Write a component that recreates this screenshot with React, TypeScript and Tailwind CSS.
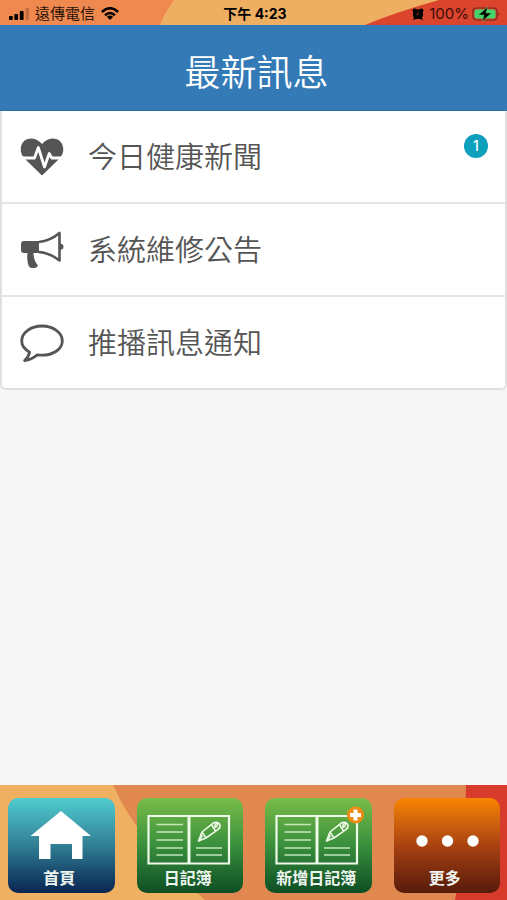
import React from "react";

function StatusBar() {
  return (
    <div className="relative h-[25px] shrink-0 overflow-hidden bg-[#f0894f] text-black">
      <svg className="absolute inset-0 h-full w-full" viewBox="0 0 507 25" preserveAspectRatio="none" aria-hidden="true">
        <path d="M174 0Q165 12 160 25H507V0Z" fill="#efaf62" />
        <path d="M439 0Q396 12 365 25H507V0Z" fill="#db452e" />
      </svg>
      <div className="relative grid h-full grid-cols-3 items-center pr-[6px] pl-[9px] pt-[2px] text-[14px] leading-[20px]">
        <div className="flex items-center whitespace-nowrap">
          <svg className="mr-[5px] h-3 w-[21px]" viewBox="0 0 21 12" aria-hidden="true">
            <rect x="0" y="8" width="3.8" height="4" rx="1" />
            <rect x="5.3" y="6" width="3.8" height="6" rx="1" />
            <rect x="10.8" y="3" width="3.8" height="9" rx="1" />
            <rect x="16.6" y="0" width="3.4" height="12" rx="1" opacity=".2" />
          </svg>
          <span className="text-[15px] text-[#2c1408]">遠傳電信</span>
          <svg className="ml-[6px] h-[13px] w-[18px]" viewBox="0 0 18 13" fill="none" stroke="black" strokeWidth="2.5" aria-hidden="true">
            <path d="M.9 5Q9-2.6 17.1 5" />
            <path d="M4 8.2Q9 3.8 14 8.2" />
            <path d="M9 13L5.9 9.8Q9 7.3 12.1 9.8Z" fill="black" stroke="none" />
          </svg>
        </div>
        <div className="text-center font-bold whitespace-nowrap">下午 4:23</div>
        <div className="flex items-center justify-end whitespace-nowrap">
          <svg className="mr-[5px] h-3 w-3" viewBox="0 0 12 12" aria-hidden="true">
            <path d="M.3 2.6Q1 .7 3 .3L4 1.2H8L9 .3Q11 .7 11.7 2.6L10.8 4Q12 7.5 10 10L10.8 11.4L9.8 12L8.6 11H3.4L2.2 12L1.2 11.4L2 10Q0 7.5 1.2 4Z" />
            <path d="M6 3.8V6.4H4.2" fill="none" stroke="#a83524" strokeWidth=".8" />
          </svg>
          <span className="mr-[3px] text-[15px] text-[#3a0e08]">100%</span>
          <svg className="h-[14px] w-[29px]" viewBox="0 0 29 14" aria-hidden="true">
            <rect x="1" y="1" width="24" height="12" rx="3.5" fill="none" stroke="#7d251a" strokeWidth="1.2" />
            <rect x="2.5" y="2.5" width="21" height="9" rx="2" fill="#45d469" />
            <path d="M26.5 5Q28.5 7 26.5 9Z" fill="#7d251a" />
            <path d="M15.5 0L6.5 8H12L10.5 14L19.5 6H14Z" stroke="#45d469" strokeWidth=".5" />
          </svg>
        </div>
      </div>
    </div>
  );
}

function HeartbeatIcon() {
  return (
    <svg className="h-[38px] w-[44px]" viewBox="0 0 44 38" aria-hidden="true">
      <path d="M22 37.5L5 21Q0 15.5 .8 10C1.6 3.5 6 .5 11.5 .5C16 .5 19.5 3 22 6C24.5 3 28 .5 32.5 .5C38 .5 42.4 3.5 43.2 10Q44 15.5 39 21Z" fill="#555" />
      <path d="M0 20H14.5L18.3 9.5L24.5 29L29.2 15.5L31.8 20H44" fill="none" stroke="white" strokeWidth="2.8" strokeLinejoin="round" />
    </svg>
  );
}

function MegaphoneIcon() {
  return (
    <svg className="h-[38px] w-[44px]" viewBox="0 0 44 38" aria-hidden="true">
      <path d="M4 10H19V22H13.5C13.5 27 15 31 18 34.5C17 37.5 11 38 9 35.5C7 31 7 26 7.5 22H4Q1 22 1 19V13Q1 10 4 10Z" fill="#555" />
      <path d="M19 11Q30 10 39.5 2V29.5Q30 22 19 21" fill="none" stroke="#555" strokeWidth="2.6" strokeLinejoin="round" />
      <path d="M40 12.5Q43.5 13 43.5 15.7T40 19Z" fill="#555" />
    </svg>
  );
}

function CommentIcon() {
  return (
    <svg className="h-[38px] w-[44px]" viewBox="0 0 44 38" fill="none" stroke="#555" strokeWidth="2.8" strokeLinejoin="round" aria-hidden="true">
      <path d="M22 2C33 2 42.3 8.5 42.3 17C42.3 25.4 33 31.2 22 31.2Q19.5 31.2 17.3 30.8Q11.5 35.6 4.6 36.6Q8.5 33.2 9.6 28.2Q1.7 23.6 1.7 17C1.7 8.5 11 2 22 2Z" />
    </svg>
  );
}

function HomeIcon() {
  return (
    <svg className="h-[58px] w-[88px]" viewBox="0 0 88 58" aria-hidden="true">
      <path d="M44 3L74 28H65.5V51H55V36H33.5V51H22V28H13.5Z" fill="white" />
    </svg>
  );
}

function DiaryIcon({ plus = false }: { plus?: boolean }) {
  return (
    <svg className="h-[58px] w-[88px] overflow-visible" viewBox="0 0 88 58" fill="none" stroke="#eef9e9" aria-hidden="true">
      <path d="M2.5 8H83V55.5H2.5Z" strokeWidth="2.2" />
      <path d="M43 8V56" strokeWidth="3" />
      <path d="M10.5 16.5H37M10.5 24H37M10.5 32H37M10.5 40H37M10.5 47H37M50 40H76M50 47H76" stroke="#c5e6bb" strokeWidth="1.6" />
      <path d="M52.5 33L56 24L67.5 14.8Q72 13 74 17Q74.4 20 71.5 21.8L60 30ZM56 24L60 30M65.5 16.5L69.5 23M69 19.5Q68.5 15.5 71 15.5Q72.5 17.5 69 19.5M52.5 33L56.5 27.5" strokeWidth="1.6" strokeLinejoin="round" />
      {plus && (
        <g stroke="none">
          <circle cx="81.5" cy="7" r="8.5" fill="#ef8b12" />
          <path d="M79.5 1.5H83.5V5H87V9H83.5V12.5H79.5V9H76V5H79.5Z" fill="white" />
        </g>
      )}
    </svg>
  );
}

function DotsIcon() {
  return (
    <svg className="h-[58px] w-[88px]" viewBox="0 0 88 58" fill="white" aria-hidden="true">
      <circle cx="19" cy="33" r="5.7" />
      <circle cx="44.5" cy="33" r="5.7" />
      <circle cx="70" cy="33" r="5.7" />
    </svg>
  );
}

const messages = [
  { label: "今日健康新聞", icon: <HeartbeatIcon />, count: 1 },
  { label: "系統維修公告", icon: <MegaphoneIcon />, count: 0 },
  { label: "推播訊息通知", icon: <CommentIcon />, count: 0 },
];

const tabs = [
  { label: "首頁", icon: <HomeIcon />, color: "from-[#50cdd0] via-[#317f94] to-[#0b2552]" },
  { label: "日記簿", icon: <DiaryIcon />, color: "from-[#79bd49] via-[#388f3c] to-[#0d4e24]" },
  { label: "新增日記簿", icon: <DiaryIcon plus />, color: "from-[#79bd49] via-[#388f3c] to-[#0d4e24]" },
  { label: "更多", icon: <DotsIcon />, color: "from-[#f98500] via-[#a94210] to-[#571b0a]" },
];

export default function App() {
  return (
    <div className="flex min-h-screen flex-col bg-[#f6f6f6] font-['Inter','Noto_Sans_CJK_TC',sans-serif]">
      <StatusBar />
      <header className="flex h-[86px] shrink-0 items-center justify-center border-b border-[#2d6ea8] bg-[#337ab7] pt-[10px] pl-[6px]">
        <h1 className="text-[36px] leading-[48px] font-[350] text-white">最新訊息</h1>
      </header>
      <main className="flex-1">
        <ul className="divide-y-2 divide-[#e5e5e5] rounded-b-md border-x-2 border-b-2 border-[#e0e0e0] bg-white">
          {messages.map((m) => (
            <li key={m.label}>
              <button type="button" className="flex h-[91px] w-full items-center pr-[17px] pl-[18px] text-left">
                {m.icon}
                <span className="ml-6 flex-1 pt-[3px] text-[29px] leading-[40px] font-[350] text-[#555]">{m.label}</span>
                {m.count > 0 && (
                  <span className="mb-[22px] flex size-6 items-center justify-center rounded-full bg-[#0ea0bd] text-[14px] leading-[16px] font-medium text-white">
                    {m.count}
                  </span>
                )}
              </button>
            </li>
          ))}
        </ul>
      </main>
      <nav className="relative h-[115px] shrink-0 overflow-hidden bg-[#e18850]">
        <svg className="absolute inset-0 h-full w-full" viewBox="0 0 507 115" preserveAspectRatio="none" aria-hidden="true">
          <path d="M0 0H113Q137 55 205 115H0Z" fill="#f0b061" />
          <path d="M466 0Q465 65 455 115H507V0Z" fill="#d63b2b" />
        </svg>
        <div className="relative flex gap-[22px] pt-[13px] pr-[7px] pl-2">
          {tabs.map((t) => (
            <button
              key={t.label}
              type="button"
              className={`flex h-[95px] min-w-0 flex-1 flex-col items-center rounded-[10px] bg-linear-to-b pt-[10px] ${t.color}`}
            >
              {t.icon}
              <span className="pr-1 text-[16px] leading-[24px] font-bold whitespace-nowrap text-[#eef4f0]">{t.label}</span>
            </button>
          ))}
        </div>
      </nav>
    </div>
  );
}
